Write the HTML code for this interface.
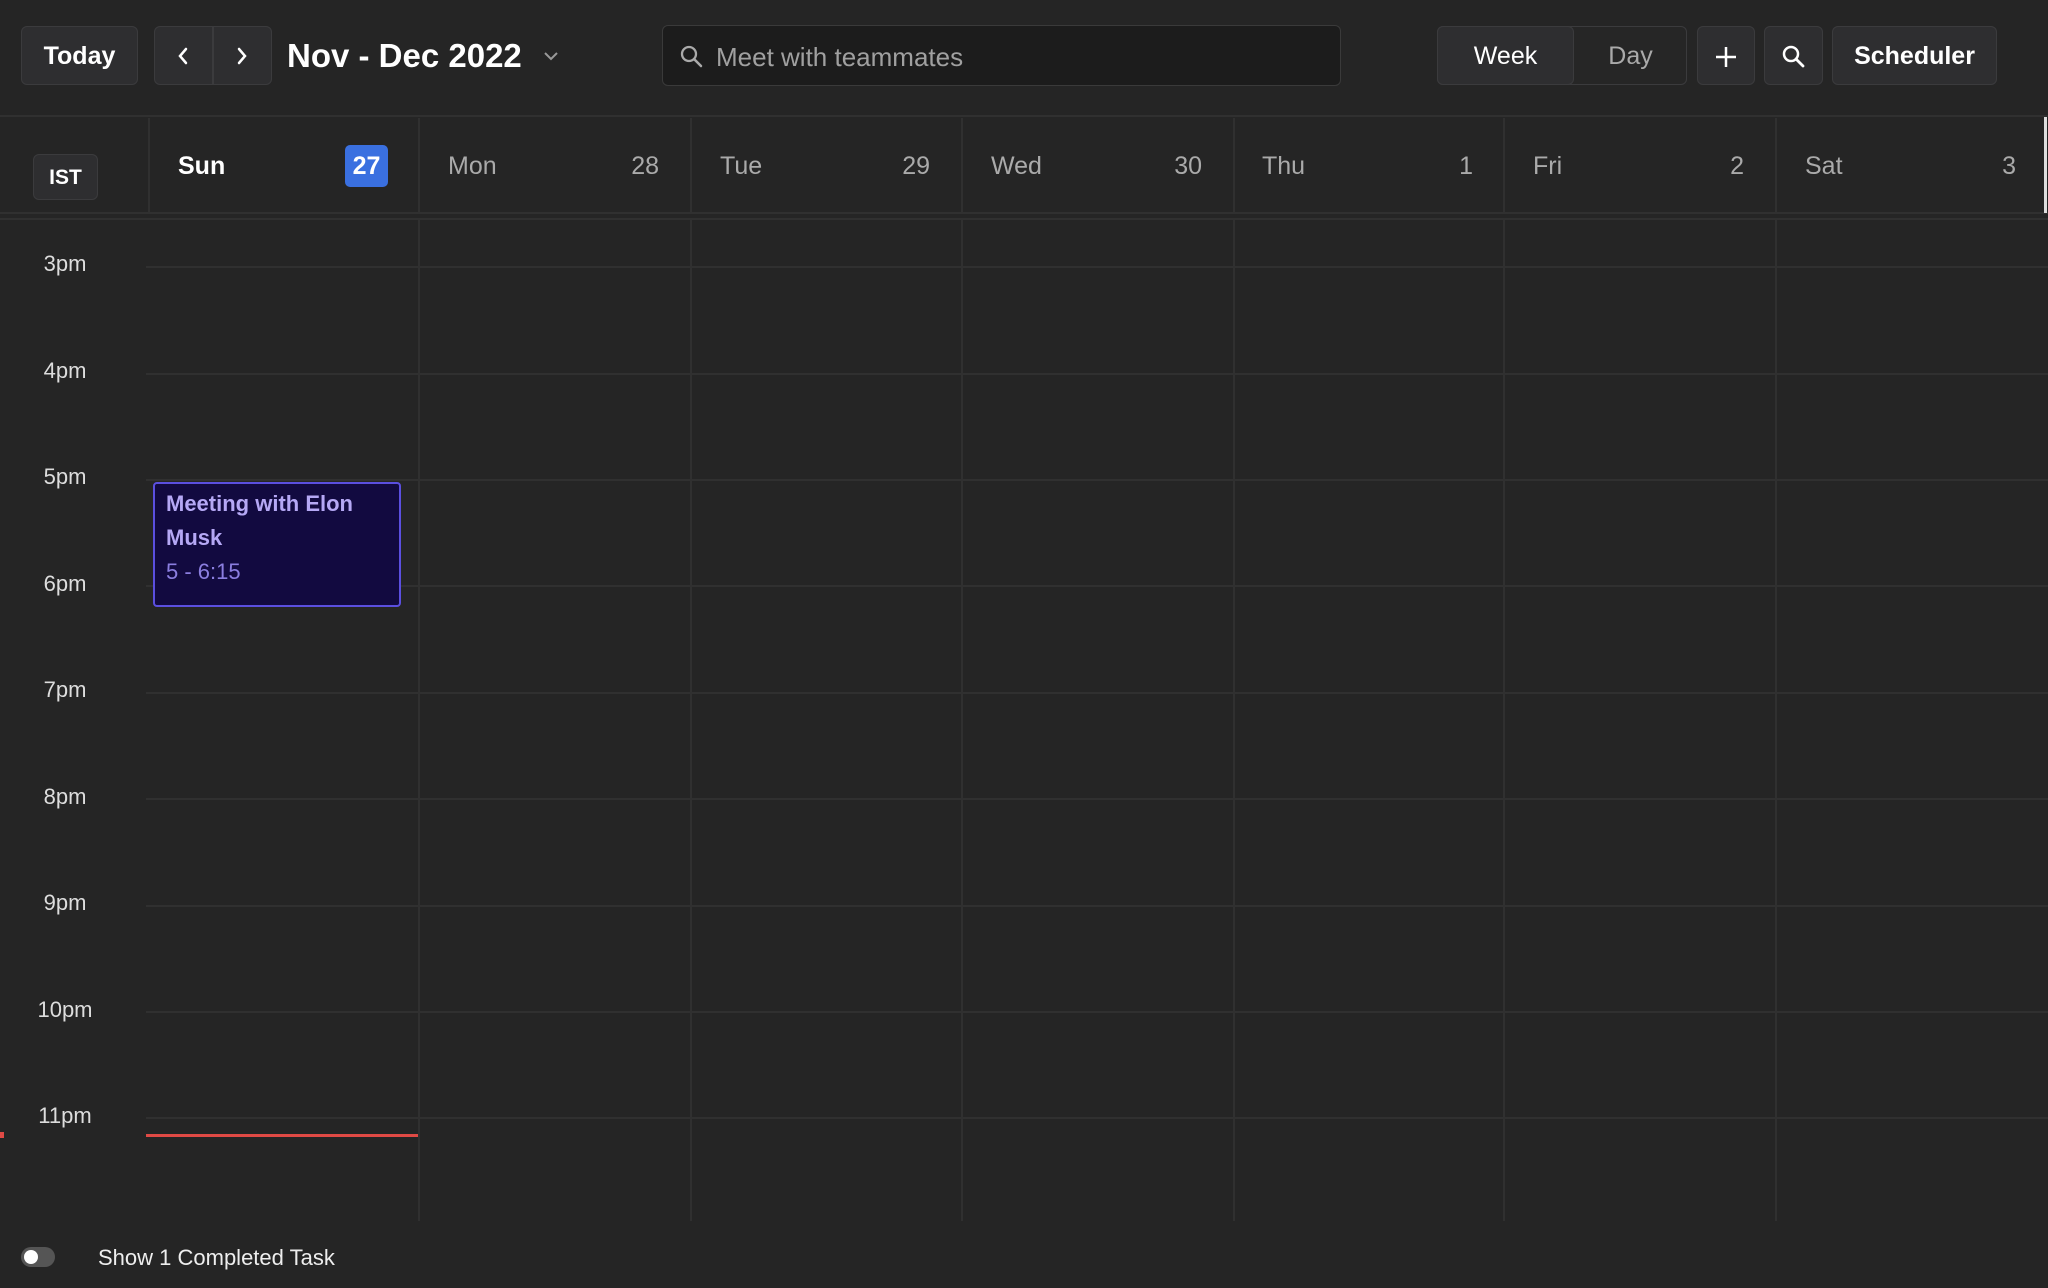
<!DOCTYPE html>
<html><head><meta charset="utf-8"><style>
*{box-sizing:border-box;margin:0;padding:0}
body{width:2048px;height:1288px;background:#252525;font-family:"Liberation Sans",sans-serif;color:#fff;position:relative;overflow:hidden}
.a{position:absolute}
.btn{position:absolute;background:#2e2e30;border:1.5px solid #3b3b3d;border-radius:6px;display:flex;align-items:center;justify-content:center;font-weight:bold;font-size:25px;color:#fff;padding-top:2px}
.vl{position:absolute;top:219px;bottom:67px;width:1.5px;background:#303030}
.hl{position:absolute;left:146px;right:0;height:1.5px;background:#303030}
.tl{position:absolute;width:130px;text-align:center;font-size:22px;color:#ddd;left:0}
.dn{position:absolute;top:152px;font-size:25px;color:#aaa}
.dd{position:absolute;top:152px;font-size:25px;color:#aaa;text-align:right;width:60px}
</style></head><body>
<div class="btn" style="left:21px;top:26px;width:117px;height:59px">Today</div>
<div class="btn" style="left:154px;top:26px;width:118px;height:59px"></div>
<div class="a" style="left:212px;top:27px;width:1.5px;height:57px;background:#3b3b3d"></div>
<svg class="a" style="left:174px;top:45px" width="18" height="22"><path d="M12 4 L6 11 L12 18" stroke="#fff" stroke-width="2.5" fill="none" stroke-linecap="round"/></svg>
<svg class="a" style="left:233px;top:45px" width="18" height="22"><path d="M6 4 L12 11 L6 18" stroke="#fff" stroke-width="2.5" fill="none" stroke-linecap="round"/></svg>
<div class="a" style="left:287px;top:37px;font-size:33px;font-weight:bold">Nov - Dec 2022</div>
<svg class="a" style="left:542px;top:49px" width="18" height="14"><path d="M3 4 L9 10 L15 4" stroke="#999" stroke-width="2" fill="none"/></svg>
<div class="a" style="left:662px;top:25px;width:679px;height:61px;background:#1c1c1c;border:1.5px solid #3a3a3a;border-radius:6px"></div>
<svg class="a" style="left:679px;top:44px" width="26" height="26"><circle cx="10" cy="10" r="7" stroke="#aaa" stroke-width="2.3" fill="none"/><path d="M15 15 L22 22" stroke="#aaa" stroke-width="2.5" stroke-linecap="round"/></svg>
<div class="a" style="left:716px;top:42px;font-size:26px;color:#a0a0a0">Meet with teammates</div>
<div class="a" style="left:1437px;top:26px;width:250px;height:59px;border:1.5px solid #3b3b3d;border-radius:6px;background:#262626"></div>
<div class="btn" style="left:1437px;top:26px;width:137px;height:59px;font-weight:normal">Week</div>
<div class="a" style="left:1574px;top:42px;width:113px;text-align:center;font-size:25px;color:#aaa">Day</div>
<div class="btn" style="left:1697px;top:26px;width:58px;height:59px"><svg width="24" height="24"><path d="M12 2V22M2 12H22" stroke="#fff" stroke-width="2.5"/></svg></div>
<div class="btn" style="left:1764px;top:26px;width:59px;height:59px"><svg width="26" height="26"><circle cx="10" cy="10" r="7" stroke="#fff" stroke-width="2.5" fill="none"/><path d="M15 15 L22 22" stroke="#fff" stroke-width="2.8" stroke-linecap="round"/></svg></div>
<div class="btn" style="left:1832px;top:26px;width:165px;height:59px">Scheduler</div>
<div class="a" style="left:0;top:115px;width:2048px;height:2px;background:#303030"></div>
<div class="a" style="left:0;top:212px;width:2048px;height:2px;background:#303030"></div>
<div class="a" style="left:0;top:218px;width:2048px;height:1.5px;background:#303030"></div>
<div class="a" style="left:2044px;top:117px;width:3px;height:96px;background:#ddd"></div>
<div class="btn" style="left:33px;top:154px;width:65px;height:46px;font-size:21px">IST</div>
<div class="a" style="left:148px;top:118px;width:1.5px;height:95px;background:#303030"></div>
<div class="a" style="left:418px;top:118px;width:1.5px;height:95px;background:#303030"></div>
<div class="a" style="left:690px;top:118px;width:1.5px;height:95px;background:#303030"></div>
<div class="a" style="left:961px;top:118px;width:1.5px;height:95px;background:#303030"></div>
<div class="a" style="left:1233px;top:118px;width:1.5px;height:95px;background:#303030"></div>
<div class="a" style="left:1503px;top:118px;width:1.5px;height:95px;background:#303030"></div>
<div class="a" style="left:1775px;top:118px;width:1.5px;height:95px;background:#303030"></div>
<div class="dn" style="left:178px;color:#fff;font-weight:bold">Sun</div>
<div class="a" style="left:345px;top:145px;width:43px;height:42px;background:#3a70e0;border-radius:5px;font-size:25px;font-weight:bold;display:flex;align-items:center;justify-content:center">27</div>
<div class="dn" style="left:448px">Mon</div><div class="dd" style="left:599px">28</div>
<div class="dn" style="left:720px">Tue</div><div class="dd" style="left:870px">29</div>
<div class="dn" style="left:991px">Wed</div><div class="dd" style="left:1142px">30</div>
<div class="dn" style="left:1262px">Thu</div><div class="dd" style="left:1413px">1</div>
<div class="dn" style="left:1533px">Fri</div><div class="dd" style="left:1684px">2</div>
<div class="dn" style="left:1805px">Sat</div><div class="dd" style="left:1956px">3</div>
<div class="vl" style="left:418px"></div><div class="vl" style="left:690px"></div><div class="vl" style="left:961px"></div><div class="vl" style="left:1233px"></div><div class="vl" style="left:1503px"></div><div class="vl" style="left:1775px"></div>
<div class="hl" style="top:266px"></div><div class="hl" style="top:373px"></div><div class="hl" style="top:479px"></div><div class="hl" style="top:585px"></div><div class="hl" style="top:692px"></div><div class="hl" style="top:798px"></div><div class="hl" style="top:905px"></div><div class="hl" style="top:1011px"></div><div class="hl" style="top:1117px"></div>
<div class="tl" style="top:251px">3pm</div><div class="tl" style="top:358px">4pm</div><div class="tl" style="top:464px">5pm</div><div class="tl" style="top:571px">6pm</div><div class="tl" style="top:677px">7pm</div><div class="tl" style="top:784px">8pm</div><div class="tl" style="top:890px">9pm</div><div class="tl" style="top:997px">10pm</div><div class="tl" style="top:1103px">11pm</div>
<div class="a" style="left:153px;top:482px;width:248px;height:125px;background:#120a40;border:2px solid #5b4fe0;border-radius:4px;padding:3px 11px">
<div style="font-size:22px;font-weight:bold;color:#b5a8f5;line-height:34px">Meeting with Elon Musk</div>
<div style="font-size:22px;color:#8b7ee0;line-height:34px">5 - 6:15</div></div>
<div class="a" style="left:146px;top:1134px;width:272px;height:3px;background:#e04a45"></div>
<div class="a" style="left:0;top:1132px;width:4px;height:6px;background:#e04a45"></div>
<div class="a" style="left:21px;top:1247px;width:34px;height:20px;border-radius:10px;background:#555"></div>
<div class="a" style="left:24px;top:1250px;width:14px;height:14px;border-radius:7px;background:#fff"></div>
<div class="a" style="left:98px;top:1245px;font-size:22px;color:#eee">Show 1 Completed Task</div>
</body></html>
